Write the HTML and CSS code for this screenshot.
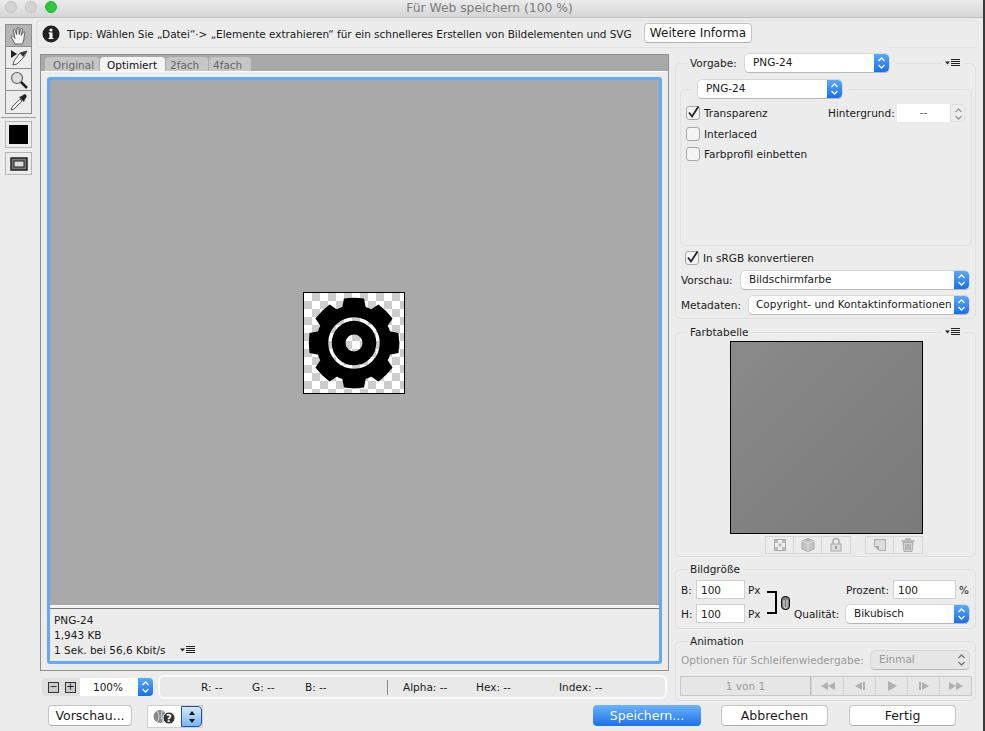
FILE: index.html
```html
<!DOCTYPE html>
<html lang="de">
<head>
    <meta charset="UTF-8">
    <title>Für Web speichern (100 %)</title>
    <link rel="stylesheet" href="styles.css">
</head>
<body>
<svg class="defs" width="0" height="0">
    <symbol id="updown" viewBox="0 0 15 18">
        <path d="M4.500 7 7.500 4l3 3M4.500 11l3 3 3-3" fill="none" stroke="currentColor" stroke-width="1.300"/>
    </symbol>
    <symbol id="flyout" viewBox="0 0 15 8">
        <path d="M0 2.500h5L2.500 5.500z" fill="#222"/>
        <path d="M6 .5h9M6 2.500h9M6 4.500h9M6 6.500h9" stroke="#222" stroke-width="1"/>
    </symbol>
</svg>
<div class="window">
    <div class="titlebar">
        <div class="lights">
            <span class="light"></span>
            <span class="light"></span>
            <span class="light light-green"></span>
        </div>
        <div class="title">Für Web speichern (100 %)</div>
    </div>

    <div class="app">
        <div class="tools">
            <div class="tool-group">
                <div class="tool tool-active">
                    <svg width="20" height="20" viewBox="0 0 20 20"><path d="M6 18 2.500 11.500c-.7-1.300.8-2 1.700-1L6 12.500 4.500 4.500c-.2-1.300 1.500-1.600 1.800-.3L7.500 8.500 8 2.500c.1-1.300 1.800-1.300 1.900 0l.3 6 1.400-5.300c.3-1.200 1.900-.9 1.700.4l-1 5.700 2-3.300c.7-1 2-.3 1.500.9L14.500 15c-.5 1.500-1 3-1.500 3z" fill="#f4f4f4" stroke="#333" stroke-width=".7"/></svg>
                </div>
                <div class="tool">
                    <svg width="20" height="20" viewBox="0 0 20 20"><path d="M2 2l6 4-6 4z" fill="#222"/><path d="M18 3 11 5l-6 8-1 4 4-1 7-7z" fill="#f4f4f4" stroke="#333" stroke-width=".8"/><path d="M18 3 11 5l3 4z" fill="#333"/></svg>
                </div>
                <div class="tool">
                    <svg width="20" height="20" viewBox="0 0 20 20"><circle cx="8" cy="8" r="5.500" fill="#ddd" stroke="#666" stroke-width="1.200"/><path d="m12 12 6 6" stroke="#222" stroke-width="2.500"/></svg>
                </div>
                <div class="tool">
                    <svg width="20" height="20" viewBox="0 0 20 20"><path d="M11 7 3 15l-1 3 3-1 8-8z" fill="#f4f4f4" stroke="#333" stroke-width=".8"/><path d="m10 5 5 5 1-3 1-1c2-2-1-5-3-3l-1 1z" fill="#222"/></svg>
                </div>
            </div>
            <div class="tools-sep"></div>
            <div class="tool-well"><span class="swatch"></span></div>
            <div class="tool-well tool-well-small">
                <svg width="18" height="14" viewBox="0 0 18 14"><rect x="1" y="1" width="16" height="12" fill="#777" stroke="#222" stroke-width="1.500"/><rect x="4" y="4" width="10" height="6" fill="#ddd" stroke="#222"/></svg>
            </div>
        </div>

        <div class="workspace">
            <div class="tipbar">
                <svg class="tip-icon" width="18" height="18" viewBox="0 0 18 18"><circle cx="9" cy="9" r="8.500" fill="#222"/><rect x="7.500" y="7.500" width="3" height="6.500" fill="#fff"/><rect x="6.500" y="7.500" width="2" height="1" fill="#fff"/><rect x="6.500" y="13" width="5" height="1" fill="#fff"/><circle cx="9" cy="5" r="1.600" fill="#fff"/></svg>
                <span class="tip-text">Tipp: Wählen Sie „Datei“·&gt; „Elemente extrahieren“ für ein schnelleres Erstellen von Bildelementen und SVG</span>
                <button class="btn btn-tip">Weitere Informa</button>
            </div>

            <div class="columns">
                <div class="preview-col">
                    <div class="preview-box">
                        <div class="tabs">
                            <span class="tab tab-original">Original</span>
                            <span class="tab tab-active">Optimiert</span>
                            <span class="tab tab-small">2fach</span>
                            <span class="tab tab-small">4fach</span>
                        </div>
                        <div class="frame-wrap">
                            <div class="frame">
                                <div class="canvas">
                                    <div class="image">
                                        <svg width="100" height="100" viewBox="0 0 100 100">
                                            <defs>
                                                <mask id="gear-cut">
                                                    <rect width="100" height="100" fill="#fff"/>
                                                    <circle cx="50" cy="50" r="24" fill="none" stroke="#000" stroke-width="3.500"/>
                                                    <circle cx="50" cy="50" r="8.500" fill="#000"/>
                                                </mask>
                                            </defs>
                                            <g mask="url(#gear-cut)" fill="#000">
                                                <circle cx="50" cy="50" r="38"/>
                                                <path d="M38 16 40 5.500Q50 4 60 5.500L62 16z"/>
                                                <path d="M38 16 40 5.500Q50 4 60 5.500L62 16z" transform="rotate(45 50 50)"/>
                                                <path d="M38 16 40 5.500Q50 4 60 5.500L62 16z" transform="rotate(90 50 50)"/>
                                                <path d="M38 16 40 5.500Q50 4 60 5.500L62 16z" transform="rotate(135 50 50)"/>
                                                <path d="M38 16 40 5.500Q50 4 60 5.500L62 16z" transform="rotate(180 50 50)"/>
                                                <path d="M38 16 40 5.500Q50 4 60 5.500L62 16z" transform="rotate(225 50 50)"/>
                                                <path d="M38 16 40 5.500Q50 4 60 5.500L62 16z" transform="rotate(270 50 50)"/>
                                                <path d="M38 16 40 5.500Q50 4 60 5.500L62 16z" transform="rotate(315 50 50)"/>
                                            </g>
                                        </svg>
                                    </div>
                                </div>
                                <div class="info">
                                    <div>PNG-24</div>
                                    <div>1,943 KB</div>
                                    <div>1 Sek. bei 56,6 Kbit/s <svg class="flyout info-flyout"><use href="#flyout"/></svg></div>
                                </div>
                            </div>
                        </div>
                    </div>

                    <div class="statusrow">
                        <div class="zoomctl">
                            <span class="zoom-btn">−</span>
                            <span class="zoom-btn">+</span>
                            <span class="zoom-value">100%</span>
                            <span class="select-arrow"><svg width="15" height="18"><use href="#updown"/></svg></span>
                        </div>
                        <div class="readout">
                            <span class="read read-r">R: --</span>
                            <span class="read read-g">G: --</span>
                            <span class="read read-b">B: --</span>
                            <span class="read-sep"></span>
                            <span class="read read-a">Alpha: --</span>
                            <span class="read read-h">Hex: --</span>
                            <span class="read">Index: --</span>
                        </div>
                    </div>
                </div>

                <div class="side">
                    <div class="group group-preset">
                        <div class="group-head">
                            <span class="legend legend-vorgabe">Vorgabe:</span>
                            <div class="select select-vorgabe"><span class="select-label">PNG-24</span><span class="select-arrow"><svg width="15" height="18"><use href="#updown"/></svg></span></div>
                            <span class="head-fill"></span>
                            <svg class="flyout"><use href="#flyout"/></svg>
                        </div>
                        <div class="group group-format">
                            <div class="group-head head-format">
                                <div class="select select-vorgabe"><span class="select-label">PNG-24</span><span class="select-arrow"><svg width="15" height="18"><use href="#updown"/></svg></span></div>
                            </div>
                            <div class="check-row check-first">
                                <span class="check check-on"><svg width="15" height="15" viewBox="0 0 15 15"><path d="M3 7.500 6 11.500 12.500 1.500" fill="none" stroke="#222" stroke-width="1.800"/></svg></span>
                                <span class="check-label">Transparenz</span>
                                <span class="matte-label">Hintergrund:</span>
                                <span class="matte"><span class="matte-value">--</span><span class="matte-arrow"><svg width="15" height="18"><use href="#updown"/></svg></span></span>
                            </div>
                            <div class="check-row check-second">
                                <span class="check"></span><span class="check-label">Interlaced</span>
                            </div>
                            <div class="check-row check-third">
                                <span class="check"></span><span class="check-label">Farbprofil einbetten</span>
                            </div>
                        </div>
                        <div class="check-row check-srgb">
                            <span class="check check-on"><svg width="15" height="15" viewBox="0 0 15 15"><path d="M3 7.500 6 11.500 12.500 1.500" fill="none" stroke="#222" stroke-width="1.800"/></svg></span>
                            <span class="check-label">In sRGB konvertieren</span>
                        </div>
                        <div class="form-row row-vorschau">
                            <span class="form-label label-vorschau">Vorschau:</span>
                            <div class="select select-grow"><span class="select-label">Bildschirmfarbe</span><span class="select-arrow"><svg width="15" height="18"><use href="#updown"/></svg></span></div>
                        </div>
                        <div class="form-row row-meta">
                            <span class="form-label label-meta">Metadaten:</span>
                            <div class="select select-grow"><span class="select-label select-label-tight">Copyright- und Kontaktinformationen</span><span class="select-arrow"><svg width="15" height="18"><use href="#updown"/></svg></span></div>
                        </div>
                    </div>

                    <div class="group group-table">
                        <div class="group-head">
                            <span class="legend">Farbtabelle</span>
                            <span class="head-fill"></span>
                            <svg class="flyout"><use href="#flyout"/></svg>
                        </div>
                        <div class="color-table"></div>
                        <div class="table-tools">
                            <div class="tool-cells">
                                <span class="cell"><svg width="16" height="16" viewBox="0 0 16 16"><rect x="2.500" y="2.500" width="11" height="11" fill="#eee" stroke="#aaa"/><path d="M3 3h3v3H3zM10 3h3v3h-3zM6.500 6.500h3v3h-3zM3 10h3v3H3zM10 10h3v3h-3z" fill="#bbb"/></svg></span>
                                <span class="cell"><svg width="16" height="16" viewBox="0 0 16 16"><path d="M8 1.500 14 4v8l-6 2.500L2 12V4z" fill="#c4c4c4" stroke="#aaa"/><path d="M2 4l6 2.500L14 4M8 6.500v8" fill="none" stroke="#e4e4e4"/></svg></span>
                                <span class="cell"><svg width="16" height="16" viewBox="0 0 16 16"><path d="M5 7V4.500a3 3 0 0 1 6 0V7" fill="none" stroke="#aaa" stroke-width="1.500"/><rect x="3" y="7" width="10" height="7" fill="#ddd" stroke="#aaa"/><rect x="7" y="9" width="2" height="3" fill="#999"/></svg></span>
                            </div>
                            <div class="tool-cells">
                                <span class="cell"><svg width="16" height="16" viewBox="0 0 16 16"><path d="M2.500 2.500h11v11H7L2.500 9z" fill="#ddd" stroke="#aaa"/><path d="M2.500 9H7v4.500z" fill="#aaa"/></svg></span>
                                <span class="cell"><svg width="16" height="16" viewBox="0 0 16 16"><path d="M1.500 4h13M6 4V2h4v2" fill="none" stroke="#aaa" stroke-width="1.300"/><path d="M3 5.500h10l-1 9H4z" fill="#d4d4d4" stroke="#aaa"/><path d="M6 7v6M8 7v6M10 7v6" stroke="#999"/></svg></span>
                            </div>
                        </div>
                    </div>

                    <div class="group group-size">
                        <div class="group-head">
                            <span class="legend">Bildgröße</span>
                        </div>
                        <div class="size-grid">
                            <div class="size-col size-left">
                                <div class="size-row"><span class="size-key">B:</span><span class="field field-size">100</span><span>Px</span></div>
                                <div class="size-row"><span class="size-key">H:</span><span class="field field-size">100</span><span>Px</span></div>
                            </div>
                            <span class="bracket"></span>
                            <svg class="clip" width="9" height="14" viewBox="0 0 9 14"><rect x=".5" y=".5" width="8" height="13" rx="3.500" fill="#777" stroke="#111"/><path d="M3 4v6.500a1.500 1.500 0 0 0 3 0V3.500" fill="none" stroke="#eee"/></svg>
                            <div class="size-col size-right">
                                <div class="size-row"><span class="prozent-label">Prozent:</span><span class="field field-percent">100</span><span>%</span></div>
                                <div class="size-row size-row-select"><span class="quality-label">Qualität:</span><div class="select select-grow"><span class="select-label">Bikubisch</span><span class="select-arrow"><svg width="15" height="18"><use href="#updown"/></svg></span></div></div>
                            </div>
                        </div>
                    </div>

                    <div class="group group-anim">
                        <div class="group-head">
                            <span class="legend">Animation</span>
                        </div>
                        <div class="form-row row-loop">
                            <span class="muted">Optionen für Schleifenwiedergabe:</span>
                            <div class="select select-off"><span class="select-label">Einmal</span><span class="off-arrow"><svg width="15" height="18"><use href="#updown"/></svg></span></div>
                        </div>
                        <div class="stepper">
                            <span class="step step-count">1 von 1</span>
                            <span class="step"><svg width="16" height="10" viewBox="0 0 16 10"><path d="M8 1 1 5l7 4zM15 1 8 5l7 4z"/></svg></span>
                            <span class="step"><svg width="14" height="10" viewBox="0 0 14 10"><path d="M9 1 2 5l7 4z"/><rect x="10" y="1" width="2" height="8"/></svg></span>
                            <span class="step"><svg width="12" height="12" viewBox="0 0 12 12"><path d="m2 1 9 5-9 5z"/></svg></span>
                            <span class="step"><svg width="14" height="10" viewBox="0 0 14 10"><rect x="2" y="1" width="2" height="8"/><path d="m5 1 7 4-7 4z"/></svg></span>
                            <span class="step"><svg width="16" height="10" viewBox="0 0 16 10"><path d="m1 1 7 4-7 4zM8 1l7 4-7 4z"/></svg></span>
                        </div>
                    </div>
                </div>
            </div>

            <div class="actions">
                <button class="btn btn-vorschau">Vorschau...</button>
                <div class="browser-ctl">
                    <span class="browser-icon">
                        <svg width="24" height="16" viewBox="0 0 24 16"><circle cx="7" cy="7.500" r="6.500" fill="#888"/><path d="M4 2c2 2 3 8 0 11M9 2c-1 3-1 8 1 11" fill="none" stroke="#ddd"/><circle cx="16" cy="9" r="6" fill="#333" stroke="#eee"/><text x="16" y="12.500" class="q-mark">?</text></svg>
                    </span>
                    <span class="browser-arrow"><svg width="8" height="14" viewBox="0 0 8 14"><path d="M4 1 7 5H1zM1 9h6l-3 4z" fill="#111"/></svg></span>
                </div>
                <button class="btn btn-primary">Speichern...</button>
                <button class="btn btn-cancel">Abbrechen</button>
                <button class="btn btn-done">Fertig</button>
            </div>
        </div>
    </div>
</div>
</body>
</html>
```

FILE: styles.css
```css
* {
    box-sizing: border-box;
}
body {
    margin: 0;
    background-color: #3a3a3a;
    font-family: "DejaVu Sans", sans-serif;
    font-size: 10.5px;
    color: #1a1a1a;
}
.defs {
    display: block;
    height: 0;
}
.window {
    width: 983px;
    height: 731px;
    background-color: #ececec;
    overflow: hidden;
}
.titlebar {
    height: 18px;
    position: relative;
    display: flex;
    justify-content: center;
    padding-right: 4px;
    background: linear-gradient(#ebebeb, #d6d6d6);
    border-bottom: 1px solid #bdbdbd;
}
.lights {
    position: absolute;
    left: 5px;
    top: 1px;
    display: flex;
    gap: 8px;
}
.light {
    width: 12px;
    height: 12px;
    border-radius: 50%;
    background-color: #d4d4d4;
    border: 1px solid #c2c2c2;
}
.light-green {
    background-color: #2fc840;
    border-color: #28b035;
}
.title {
    color: #7c7c7c;
    font-size: 12.300px;
    line-height: 16px;
}
.app {
    display: flex;
}

/* tool strip */
.tools {
    width: 36px;
    padding-top: 6px;
    flex-shrink: 0;
}
.tool-group {
    width: 27px;
    margin-left: 5px;
    border: 1px solid #8e8e8e;
}
.tool {
    height: 22px;
    display: flex;
    align-items: center;
    justify-content: center;
    border-bottom: 1px solid #8e8e8e;
}
.tool:last-child {
    border-bottom: none;
}
.tool-active {
    background-color: #b4b4b4;
}
.tools-sep {
    height: 1px;
    background-color: #9c9c9c;
    margin: 3px 0 3px 1px;
}
.tool-well {
    width: 27px;
    height: 27px;
    margin: 0 0 4px 5px;
    border: 1px solid #b5b5b5;
    background-color: #ececec;
    display: flex;
    align-items: center;
    justify-content: center;
}
.tool-well-small {
    height: 23px;
}
.swatch {
    width: 19px;
    height: 19px;
    background-color: #000;
}

/* tip */
.workspace {
    width: 943px;
    padding-left: 4px;
}
.tipbar {
    width: 942px;
    height: 28px;
    margin: 2px 0 0 -4px;
    padding-left: 5px;
    border: 1px solid #e2e2e2;
    border-radius: 4px;
    display: flex;
    align-items: center;
}
.tip-icon {
    flex-shrink: 0;
}
.tip-text {
    margin-left: 7px;
    width: 577px;
    white-space: nowrap;
    letter-spacing: -.04px;
}
.btn {
    font: inherit;
    color: #1a1a1a;
    height: 21px;
    padding: 0;
    background-color: #fff;
    border: 1px solid #c4c4c4;
    border-bottom-color: #aeaeae;
    border-radius: 4px;
}
.btn-tip {
    width: 108px;
    height: 20px;
    margin-bottom: 2px;
    font-size: 12px;
    white-space: nowrap;
}

.columns {
    display: flex;
    gap: 6px;
    height: 646px;
    margin-top: 6px;
}
.preview-col {
    width: 629px;
}

/* preview */
.preview-box {
    height: 617px;
    border: 1px solid #8f8f8f;
    display: flex;
    flex-direction: column;
}
.tabs {
    height: 16px;
    padding: 2px 0 0 4px;
    background-color: #a9a9a9;
    display: flex;
}
.tab {
    height: 14px;
    padding-left: 4px;
    line-height: 17px;
    background-color: #c6c6c6;
    color: #666;
    border-radius: 4px 4px 0 0;
    border-right: 1px solid #a9a9a9;
    overflow: hidden;
}
.tab-original {
    width: 55px;
    padding-left: 8px;
}
.tab-active {
    width: 66px;
    padding-left: 7px;
    background-color: #f4f4f4;
    color: #111;
}
.tab-small {
    width: 43px;
}
.frame-wrap {
    flex: 1;
    display: flex;
    padding: 5px 6px 6px 6px;
    border-top: 1px solid #fff;
}
.frame {
    flex: 1;
    display: flex;
    flex-direction: column;
    border: 3px solid #66a9f3;
    border-radius: 3px;
}
.canvas {
    height: 528px;
    padding-right: 1px;
    background-color: #a9a9a9;
    border-bottom: 3px solid #f5f5f5;
    display: flex;
    align-items: center;
    justify-content: center;
}
.image {
    width: 102px;
    height: 102px;
    border: 1px solid #000;
    background: repeating-conic-gradient(#cdcdcd 0 25%, #fff 0 50%) 0 0 / 16px 16px;
}
.image svg {
    display: block;
}
.info {
    flex: 1;
    padding: 4px 0 0 4px;
    line-height: 15px;
    border-top: 1px solid #777;
}
.flyout {
    width: 15px;
    height: 8px;
    flex-shrink: 0;
}
.info-flyout {
    margin-left: 11px;
}

/* zoom + readout */
.statusrow {
    display: flex;
    align-items: center;
    gap: 5px;
    margin-top: 4px;
    padding-left: 2px;
    height: 24px;
}
.zoomctl {
    width: 111px;
    height: 18px;
    display: flex;
    align-items: center;
    background-color: #e0e0e0;
    border-radius: 4px;
    padding-left: 6px;
    flex-shrink: 0;
}
.zoom-btn {
    width: 11px;
    height: 11px;
    margin-right: 6px;
    line-height: 8px;
    text-align: center;
    border: 1px solid #333;
    background-color: #ccc;
    font-size: 10px;
}
.zoom-value {
    width: 58px;
    margin-left: -2px;
    padding-right: 2px;
    height: 18px;
    line-height: 18px;
    text-align: center;
    background-color: #fff;
}
.readout {
    width: 509px;
    height: 24px;
    display: flex;
    align-items: center;
    padding-left: 41px;
    background-color: #e9e9e9;
    border: 2px solid #fafafa;
    border-radius: 6px;
}
.read {
    white-space: nowrap;
}
.read-r {
    width: 51px;
}
.read-g {
    width: 53px;
}
.read-b {
    width: 82px;
}
.read-sep {
    width: 1px;
    height: 15px;
    background-color: #888;
    margin-right: 15px;
}
.read-a {
    width: 73px;
}
.read-h {
    width: 83px;
}

/* selects */
.select {
    height: 18px;
    display: flex;
    background-color: #fff;
    border-radius: 4px;
    box-shadow: 0 0 0 .5px #c0c0c0, 0 1px 0 #b0b0b0;
    overflow: hidden;
}
.select-label {
    flex: 1;
    padding-left: 8px;
    line-height: 17px;
    white-space: nowrap;
    overflow: hidden;
}
.select-label-tight {
    padding-left: 7px;
}
.select-arrow {
    width: 15px;
    height: 18px;
    flex-shrink: 0;
    display: block;
    color: #fff;
    background: linear-gradient(#5aa9fb, #1a6fe9);
    border-radius: 0 4px 4px 0;
}
.select-arrow svg,
.off-arrow svg,
.matte-arrow svg {
    display: block;
}
.select-vorgabe {
    width: 144px;
}
.select-grow {
    flex: 1;
}
.select-off {
    width: 98px;
    color: #999;
    background-color: #e6e6e6;
}
.off-arrow {
    width: 15px;
    color: #777;
}

/* side panel groups */
.side {
    width: 301px;
}
.group {
    border: 1px solid #e0e0e0;
    border-radius: 5px;
}
.group-head {
    display: flex;
    align-items: center;
    height: 18px;
    margin-top: -10px;
    padding-left: 11px;
    padding-right: 10px;
}
.legend {
    background-color: #ececec;
    padding: 0 3px;
}
.legend-vorgabe {
    width: 58px;
    white-space: nowrap;
}
.group-head .select {
    box-shadow: 0 0 0 .5px #c0c0c0, 0 1px 0 #b0b0b0, 0 0 0 7px #ececec;
}
.head-fill {
    flex: 1;
}
.group-head .flyout {
    margin: 0 5px 0 3px;
    background-color: #ececec;
    box-shadow: 0 0 0 3px #ececec;
}
.group-preset {
    margin-top: 9px;
    height: 256px;
}
.group-format {
    height: 157px;
    margin: 17px 3px 0 4px;
}
.head-format {
    padding-left: 17px;
}
.check-row {
    display: flex;
    align-items: center;
    height: 18px;
    padding-left: 5px;
}
.check-first {
    margin-top: 6px;
}
.check-second {
    margin-top: 3px;
}
.check-third {
    margin-top: 2px;
}
.check-srgb {
    margin: 3px 0 0 5px;
    padding-left: 4px;
}
.check {
    width: 14px;
    height: 14px;
    background-color: #f4f4f4;
    border: 1px solid #a8a8a8;
    border-radius: 3px;
    margin-right: 4px;
    flex-shrink: 0;
}
.check svg {
    display: block;
    margin: -2px 0 0 -1px;
}
.check-label {
    width: 62px;
    white-space: nowrap;
}
.matte-label {
    margin-left: 62px;
    width: 69px;
    white-space: nowrap;
}
.matte {
    display: flex;
    width: 68px;
    height: 18px;
    background-color: #fff;
    border-radius: 0 4px 4px 0;
}
.matte-value {
    flex: 1;
    text-align: center;
    line-height: 17px;
    color: #555;
}
.matte-arrow {
    width: 15px;
    color: #999;
    background-color: #eee;
    border: 1px solid #ddd;
    border-radius: 0 4px 4px 0;
}
.form-row {
    display: flex;
    align-items: center;
    padding: 0 6px 0 5px;
    white-space: nowrap;
}
.form-label {
    flex-shrink: 0;
}
.label-vorschau {
    width: 60px;
}
.label-meta {
    width: 68px;
}
.row-vorschau {
    margin-top: 4px;
}
.row-meta {
    margin-top: 7px;
}
.group-table {
    margin-top: 13px;
    height: 225px;
}
.color-table {
    width: 193px;
    height: 193px;
    margin-left: 54px;
    background: linear-gradient(135deg, #8a8a8a, #7a7a7a);
    border: 1px solid #000;
}
.table-tools {
    display: flex;
    justify-content: space-between;
    width: 158px;
    margin: 2px 0 0 89px;
}
.tool-cells {
    display: flex;
    border: 1px solid #d6d6d6;
    height: 18px;
}
.cell {
    width: 28px;
    display: flex;
    align-items: center;
    justify-content: center;
    border-right: 1px solid #d6d6d6;
}
.cell:last-child {
    border-right: none;
}
.group-size {
    margin-top: 12px;
    height: 60px;
}
.size-grid {
    display: flex;
    align-items: center;
    margin-top: 2px;
    padding: 0 5px;
}
.size-col {
    display: flex;
    flex-direction: column;
    gap: 5px;
    flex-shrink: 0;
}
.size-left {
    width: 86px;
}
.size-row {
    display: flex;
    align-items: center;
    height: 19px;
}
.size-key {
    width: 15px;
}
.field {
    height: 19px;
    line-height: 18px;
    padding-left: 4px;
    background-color: #fff;
    border: 1px solid #d0d0d0;
    margin-right: 3px;
}
.field-size {
    width: 49px;
}
.bracket {
    width: 10px;
    height: 23px;
    margin-top: 2px;
    border: 2px solid #000;
    border-left: none;
}
.clip {
    margin: 2px 0 0 4px;
    flex-shrink: 0;
}
.size-right {
    width: 176px;
    margin-left: 4px;
}
.prozent-label {
    margin-left: 52px;
    width: 47px;
    white-space: nowrap;
}
.field-percent {
    width: 63px;
}
.size-row-select {
    padding-right: 1px;
}
.quality-label {
    width: 52px;
    flex-shrink: 0;
    white-space: nowrap;
}
.group-anim {
    margin-top: 12px;
    height: 60px;
}
.muted {
    color: #999;
}
.row-loop {
    margin-top: 1px;
    justify-content: space-between;
}
.stepper {
    display: flex;
    height: 20px;
    margin: 7px 3px 0 4px;
    border: 1px solid #c8c8c8;
    background-color: #e6e6e6;
}
.step {
    width: 32px;
    display: flex;
    align-items: center;
    justify-content: center;
    border-left: 1px solid #d4d4d4;
    fill: #b0b0b0;
}
.step-count {
    width: 130px;
    flex-shrink: 0;
    color: #999;
    border-left: none;
    border-right: 1px solid #bbb;
}

/* bottom buttons */
.actions {
    display: flex;
    margin-top: 5px;
    padding-left: 8px;
}
.btn-vorschau {
    width: 84px;
    font-size: 12.500px;
}
.browser-ctl {
    display: flex;
    width: 56px;
    height: 23px;
    margin-left: 15px;
    background-color: #fff;
    border: 1px solid #d0d0d0;
}
.browser-icon {
    flex: 1;
    display: flex;
    align-items: center;
    justify-content: center;
}
.q-mark {
    font-size: 10px;
    font-weight: bold;
    fill: #fff;
    text-anchor: middle;
}
.browser-arrow {
    width: 21px;
    display: flex;
    align-items: center;
    justify-content: center;
    background: linear-gradient(#d5e8fc, #79b8f8);
    border: 1px solid #244e9e;
    border-radius: 0 4px 4px 0;
}
.btn-primary {
    width: 108px;
    margin-left: 390px;
    font-size: 12.500px;
    color: #fff;
    border: none;
    background: linear-gradient(#6cb3fa, #1b72ec);
}
.btn-cancel {
    width: 107px;
    margin-left: 20px;
    font-size: 12.500px;
}
.btn-done {
    width: 107px;
    margin-left: 21px;
    font-size: 12.500px;
}
```
